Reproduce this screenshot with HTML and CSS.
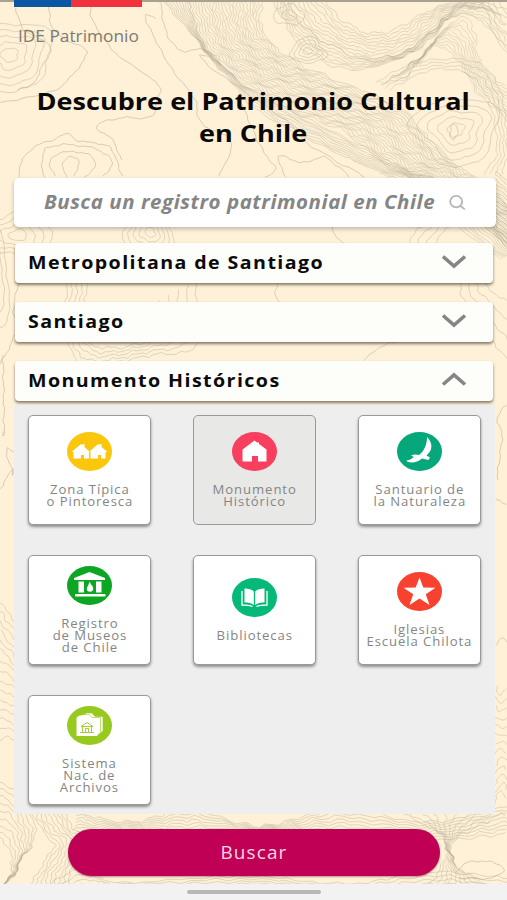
FILE: index.html
```
<!DOCTYPE html>
<html lang="es">
<head>
	<meta charset="utf-8">
	<title>IDE Patrimonio</title>
	<link rel="stylesheet" href="styles.css">
</head>
<body>
	<svg id="map" class="map" viewBox="0 0 507 900"></svg>
	<div class="app">
		<header class="top">
			<div class="flag"><i class="blue"></i><i class="red"></i></div>
			<div class="brand"><span class="wide">IDE Patrimonio</span></div>
		</header>
		<h1 class="title"><span class="wide">Descubre el Patrimonio Cultural<br>en Chile</span></h1>
		<div class="search">
			<span class="wide">Busca un registro patrimonial en Chile</span>
			<svg class="search-icon" viewBox="0 0 17 16"><ellipse cx="7.2" cy="6.6" rx="6" ry="5.7"/><path d="M11.5 11l4.3 3.4"/></svg>
		</div>
		<div class="select"><span class="wide">Metropolitana de Santiago</span><svg class="chevron" viewBox="0 0 26 16"><path d="M2 2.500l11 9.500l11-9.500"/></svg></div>
		<div class="select"><span class="wide">Santiago</span><svg class="chevron" viewBox="0 0 26 16"><path d="M2 2.500l11 9.500l11-9.500"/></svg></div>
		<div class="select open"><span class="wide">Monumento Históricos</span><svg class="chevron" viewBox="0 0 26 16"><path d="M2 12.500l11-9.500l11 9.500"/></svg></div>
		<div class="panel">
			<div class="card">
				<svg class="icon" viewBox="0 0 45 39"><ellipse fill="#fbc70d" cx="22.500" cy="19.500" rx="22.500" ry="19.500"/>
					<path fill="#fff" d="M5 19.500L14 12l1.500 1.500V12h2v3l5 4.500L31 12l1.500 1.500V12h2v3L40 19.500l-1.500 1V26.500H34V23h-3v3.500h-7.500v-7h-1.500v7h-5V23h-3v3.500H6.500v-6z"/></svg>
				<p class="wide">Zona Típica<br>o Pintoresca</p>
			</div>
			<div class="card active">
				<svg class="icon" viewBox="0 0 45 39"><ellipse fill="#f83f5e" cx="22.500" cy="19.500" rx="22.500" ry="19.500"/>
					<path fill="#fff" d="M10.500 17.500L22.500 8.500l2.500 2h2v1.500L34.500 17.500V29.500H26V24h-6v5.500h-9.500z"/></svg>
				<p class="wide">Monumento<br>Histórico</p>
			</div>
			<div class="card">
				<svg class="icon" viewBox="0 0 45 39"><ellipse fill="#06a77a" cx="22.500" cy="19.500" rx="22.500" ry="19.500"/>
					<path fill="#fff" d="M30 5C36 11 36 18 29.500 23.500L33 25.500 31.500 28 25 26.500C21 30 15 31.500 10.500 29.800L9.500 28.500C13 28 15 26.500 17 25L14 23.500C17 22 20 22.500 22 23 27 19 30 13 30 5z"/></svg>
				<p class="wide">Santuario de<br>la Naturaleza</p>
			</div>
			<div class="card">
				<svg class="icon" viewBox="0 0 45 39"><ellipse fill="#0ca622" cx="22.500" cy="19.500" rx="22.500" ry="19.500"/>
					<path fill="#fff" d="M22.500 6L38 12v2H7v-2zM11.500 15.500h5.500v11h-5.500zM29 15.500h5.500v11H29zM8 28h30.500v2.500H8zM23 15.500c0 3 3.200 4 3.200 7a3.200 3.200 0 0 1-6.400 0c0-2 1.800-2.500 1.800-4.500z"/></svg>
				<p class="wide">Registro<br>de Museos<br>de Chile</p>
			</div>
			<div class="card">
				<svg class="icon" viewBox="0 0 45 39"><ellipse fill="#07b979" cx="22.500" cy="19.500" rx="22.500" ry="19.500"/>
					<path fill="#fff" d="M12.500 10.500c4 0 7 .7 9.300 3V27c-2.500-2-5.300-2.500-9.300-2.500zM32.500 10.500c-4 0-7 .7-9.300 3V27c2.500-2 5.300-2.500 9.300-2.500z"/>
					<path fill="none" stroke="#fff" stroke-width="1.300" d="M10 13v14c5 0 8 .2 10.500 1.500M35 13v14c-5 0-8 .2-10.500 1.500"/></svg>
				<p class="wide">Bibliotecas</p>
			</div>
			<div class="card">
				<svg class="icon" viewBox="0 0 45 39"><ellipse fill="#f8412e" cx="22.500" cy="19.500" rx="22.500" ry="19.500"/>
					<path fill="#fff" d="M22.500 5.500L26.300 15.600 38.500 15.800 28.800 22.300 32.500 33 22.500 26.600 12.500 33 16.200 22.300 6.500 15.800 18.700 15.600z"/></svg>
				<p class="wide">Iglesias<br>Escuela Chilota</p>
			</div>
			<div class="card">
				<svg class="icon" viewBox="0 0 45 39"><ellipse fill="#98c91f" cx="22.500" cy="19.500" rx="22.500" ry="19.500"/>
					<path fill="#fff" stroke="#98c91f" stroke-width=".6" d="M16 10l3-3h6l3 3.500h8V25l-4 3H16z"/>
					<path fill="#fff" stroke="#98c91f" stroke-width=".6" d="M13 11l3-2.500h6l3 3h8.500V27l-3 2H13z"/>
					<path fill="#fff" d="M9.500 11.500l3-2h6l3 3H30.500V30h-21z"/>
					<path fill="none" stroke="#98c91f" stroke-width=".9" d="M14 20.500l6-4 6 4zM15.500 21v5M18.500 26v-3.500h3V26M24.500 21v5M13 26.500h14"/></svg>
				<p class="wide">Sistema<br>Nac. de<br>Archivos</p>
			</div>
		</div>
		<div class="actions"><button class="submit"><span class="wide">Buscar</span></button></div>
		<div class="navbar"><div class="handle"></div></div>
	</div>
	<script src="map.js"></script>
</body>
</html>
```
FILE: styles.css
```
* {
	box-sizing: border-box;
}

body {
	margin: 0;
	background: #fef1d8;
	font-family: "Open Sans", "Noto Sans", sans-serif;
	overflow: hidden;
}

.map {
	position: absolute;
	top: 0;
	left: 0;
	width: 507px;
	height: 900px;
	fill: none;
	stroke: #a99f88;
	stroke-width: .9;
	stroke-linejoin: round;
}

.app {
	position: relative;
	width: 507px;
	height: 900px;
	display: flex;
	flex-direction: column;
}

/* texts are drawn a bit wider than the font */
.wide {
	display: inline-block;
	transform: scaleX(1.08);
	transform-origin: left center;
	white-space: nowrap;
}

.top {
	height: 85px;
	border-top: 2px solid #aaa291;
}

.flag {
	display: flex;
	margin: -2px 0 0 14px;
	height: 7px;
}

.flag i {
	width: 57px;
	background: #0b57a4;
}

.flag .red {
	width: 71px;
	background: #f0323f;
}

.brand {
	margin: 17px 0 0 18px;
	font-size: 16px;
	line-height: 24px;
	color: #807a70;
}

.title {
	margin: 0;
	height: 93px;
	font-size: 24px;
	line-height: 32px;
	font-weight: 700;
	text-align: center;
	color: #0a0808;
}

.title .wide {
	transform: scaleX(1.127);
}

.title .wide, .card .wide, .submit .wide {
	transform-origin: center;
}

.search {
	display: flex;
	align-items: center;
	margin: 0 11px 16px 14px;
	height: 49px;
	padding: 0 0 2px 30px;
	background: #fff;
	border-radius: 5px;
	box-shadow: 0 2px 4px rgba(0,0,0,.25);
	font-size: 19px;
	font-weight: 700;
	font-style: italic;
	letter-spacing: .5px;
	color: #858585;
}

.search .wide {
	width: 405px;
	transform: scaleX(1.077);
}

.search-icon {
	width: 17px;
	height: 16px;
	margin-top: 2px;
	fill: none;
	stroke: #b5b5b5;
	stroke-width: 1.8;
}

.select {
	display: flex;
	align-items: center;
	justify-content: space-between;
	margin: 0 14px 19.500px 15px;
	height: 39.500px;
	padding: 0 26px 1px 13px;
	background: #fdfdfa;
	border-radius: 4px;
	box-shadow: 0 2px 3px rgba(70,60,45,.65);
	font-size: 18px;
	font-weight: 700;
	letter-spacing: 1.300px;
	color: #0b0b0b;
}

.select .wide {
	transform: scaleX(1.09);
}

.select.open {
	margin-bottom: 4px;
}

.chevron {
	width: 26px;
	height: 16px;
	fill: none;
	stroke: #858585;
	stroke-width: 3.600;
}

.panel {
	display: grid;
	grid-template-columns: repeat(3, 123px);
	grid-auto-rows: 110px;
	gap: 30px 42px;
	margin: 0 12px 0 14px;
	height: 409px;
	padding: 10px 14px;
	background: #eee;
}

.card {
	display: flex;
	flex-direction: column;
	align-items: center;
	justify-content: center;
	background: #fff;
	border: 1px solid #999;
	border-radius: 5px;
	box-shadow: 0 2px 3px rgba(0,0,0,.4);
}

.card.active {
	background: #e8e8e6;
	box-shadow: none;
}

.icon {
	width: 45px;
	height: 39px;
	flex: none;
}

.card p {
	margin: 12px 0 1px;
	font-size: 13px;
	line-height: 12px;
	letter-spacing: .9px;
	text-align: center;
	color: #858585;
}

.card .wide {
	transform: scaleX(1.01);
}

.actions {
	height: 70px;
	padding: 15px 67px 0 68px;
}

.submit {
	display: block;
	width: 372px;
	height: 47px;
	padding: 0;
	border: 0;
	border-radius: 24px;
	background: #bf0055;
	box-shadow: 0 1px 2px rgba(90,0,40,.4);
	font: 500 18px "Open Sans", sans-serif;
	letter-spacing: 1.100px;
	color: #f8d5e5;
}

.submit .wide {
	transform: scaleX(1.05);
}

.navbar {
	flex: 1;
	padding-top: 6px;
	background: #f2f2f2;
}

.handle {
	width: 134px;
	height: 4px;
	margin-left: 187px;
	border-radius: 2px;
	background: #b8b8b8;
}
```
FILE: map.js
```
// Topographic background: bands of contours between two guide lines,
// closed rings around the summits and a few loose lines.
var map = document.getElementById('map');

function draw(points, closed, opacity)
{
	var d = '';
	points.forEach(function(p, i) {
		d += (i ? 'L' : 'M') + p[0].toFixed(1) + ' ' + p[1].toFixed(1);
	});
	var path = document.createElementNS('http://www.w3.org/2000/svg', 'path');
	path.setAttribute('d', d + (closed ? 'Z' : ''));
	path.setAttribute('opacity', opacity);
	map.appendChild(path);
}

function resample(pts, n)
{
	var out = [];
	for(var i = 0; i <= n; i++) {
		var t = i / n * (pts.length - 1), k = Math.min(Math.floor(t), pts.length - 2), f = t - k;
		var a = pts[Math.max(k - 1, 0)], b = pts[k], c = pts[k + 1], e = pts[Math.min(k + 2, pts.length - 1)];
		out.push([0, 1].map(function(j) {
			return .5 * (2 * b[j] + (c[j] - a[j]) * f + (2 * a[j] - 5 * b[j] + 4 * c[j] - e[j]) * f * f + (3 * b[j] - a[j] - 3 * c[j] + e[j]) * f * f * f);
		}));
	}
	return out;
}

function wobble(x, y, amp)
{
	return [
		x + amp * (Math.sin(y * .31 + x * .07) + .6 * Math.sin(y * .73 - x * .21)),
		y + amp * (Math.sin(x * .27 - y * .09) + .6 * Math.sin(x * .67 + y * .17))
	];
}

function band(a, b, count, amp, opacity)
{
	a = resample(a, 70);
	b = resample(b, 70);
	for(var i = 0; i < count; i++) {
		var t = i / (count - 1 || 1);
		draw(a.map(function(p, k) {
			return wobble(p[0] + (b[k][0] - p[0]) * t, p[1] + (b[k][1] - p[1]) * t, amp);
		}), false, opacity);
	}
}

function rings(cx, cy, rx, ry, count, opacity)
{
	for(var i = 1; i <= count; i++) {
		var pts = [];
		for(var k = 0; k < 48; k++) {
			var a = k / 48 * Math.PI * 2, r = i / count * (1 + .12 * Math.sin(a * 3 + cx) + .07 * Math.sin(a * 5 + cy));
			pts.push(wobble(cx + rx * r * Math.cos(a), cy + ry * r * Math.sin(a), .6));
		}
		draw(pts, true, opacity);
	}
}

function line(pts, opacity)
{
	band(pts, pts, 1, .7, opacity || .5);
}

// main ridge
band([[188,0],[205,45],[245,85],[300,115],[370,150],[410,172],[465,190],[515,250]],
	[[163,0],[196,40],[225,75],[260,112],[320,145],[370,168],[410,190],[500,260]], 10, 1, .36);
band([[262,0],[262,30],[290,58],[335,80],[400,108],[440,150],[480,182],[520,215]],
	[[188,0],[205,42],[240,78],[290,110],[345,132],[385,165],[430,190],[515,250]], 25, 1.6, .36);
// north east valley
band([[282,0],[298,22],[325,42],[365,60],[405,55],[435,30],[465,8],[500,14]],
	[[325,0],[340,18],[358,30],[382,33],[405,25],[425,12],[445,4],[470,-8]], 10, 1.3, .38);
band([[270,0],[282,18],[305,50],[355,70],[420,48],[450,18],[480,20],[507,55]],
	[[290,0],[298,20],[325,42],[365,58],[408,50],[440,22],[470,-2],[507,10]], 7, 1.3, .36);
band([[380,82],[405,78],[425,50],[445,48],[465,72],[480,95],[507,120]],
	[[420,65],[445,28],[465,18],[475,35],[478,58],[490,75],[507,85]], 11, 1.2, .32);
band([[480,0],[488,15],[494,35],[507,45]], [[500,0],[502,8],[505,12],[507,14]], 4, .6, .4);
rings(308, 51, 17, 13, 4, .4);
rings(289, 15, 15, 10, 2, .4);
rings(456, 130, 42, 34, 5, .42);
rings(454, 132, 4, 7, 1, .5);
band([[390,90],[430,70],[470,75],[490,105],[497,150],[485,174]],
	[[375,82],[420,62],[475,62],[500,90],[507,150],[500,176]], 4, 1, .36);
band([[495,172],[507,180]], [[494,235],[507,246]], 17, .8, .5);
// west side
rings(10, 55, 43, 34, 5, .42);
line([[20,177],[21,162],[35,147],[52,140],[68,134],[80,141],[108,146],[116,160],[122,177]]);
line([[44,177],[42,160],[47,148],[62,145],[75,145],[95,149],[110,157],[110,168],[103,177]]);
line([[55,177],[50,164],[56,154],[70,152],[88,154],[95,165],[85,177]]);
line([[66,177],[63,165],[68,158],[79,159],[77,169],[74,177]]);
line([[16,8],[24,30],[50,45],[43,65],[32,84],[18,90]]);
line([[48,0],[52,27],[67,40],[87,52],[76,70],[55,90],[0,103]]);
line([[92,0],[93,22],[118,55],[157,83],[157,100],[150,117],[120,118],[96,126],[112,140],[121,160]]);
line([[157,18],[145,16],[160,48],[176,75],[195,100],[200,122],[220,133],[232,146],[218,177]]);
line([[160,0],[166,32],[180,50],[207,50],[222,65]]);
line([[240,100],[260,145],[275,168],[266,177]]);
line([[222,65],[208,56],[202,60],[245,92],[285,120],[310,145],[365,177]]);
line([[286,177],[278,160],[285,156],[302,163],[322,157],[338,166],[350,177]]);
// between the fields
rings(18, 235, 36, 22, 4, .42);
rings(150, 232, 24, 26, 5, .4);
band([[68,275],[66,310],[72,352],[92,365],[150,355],[195,345],[195,280]],
	[[88,275],[85,305],[88,340],[110,348],[145,342],[165,325],[160,300]], 5, 1.2, .4);
line([[332,226],[335,236],[350,245]]);
line([[280,280],[275,292],[280,304]]);
line([[400,340],[378,348],[365,361]]);
band([[425,225],[410,243],[455,275],[465,302],[507,360]], [[450,225],[438,245],[475,270],[490,290],[507,300]], 4, 1, .42);
// left and right edges
rings(-6, 282, 14, 58, 3, .42);
line([[20,280],[13,310],[20,325],[10,345],[0,365]]);
line([[3,355],[4,430],[2,432]]);
line([[14,452],[6,450],[13,475],[12,470],[3,485],[0,488]]);
line([[507,405],[496,420],[502,432],[497,480]]);
line([[507,505],[495,498]]);
line([[495,645],[501,638],[507,642]]);
band([[0,600],[8,613],[20,628]], [[0,740],[8,738],[20,742]], 15, 1.2, .4);
band([[495,685],[501,695],[507,690]], [[494,805],[501,790],[507,798]], 13, 1.2, .38);
// bottom strip
band([[-5,780],[15,790],[28,808],[35,835],[22,860],[5,890]], [[-5,838],[3,840],[10,850],[12,865],[8,880],[0,890]], 9, 1.2, .42);
band([[28,800],[38,825],[54,845],[40,868],[30,890]], [[70,800],[68,820],[86,842],[74,865],[64,890]], 9, 1.4, .42);
band([[75,812],[130,822],[190,810],[260,826],[340,810],[430,822],[507,806]],
	[[75,835],[130,832],[190,834],[260,832],[340,834],[430,840],[507,834]], 8, 1.4, .4);
band([[395,810],[440,835],[445,860],[425,890]], [[507,812],[455,840],[460,868],[500,890]], 10, 1.4, .38);
band([[40,890],[80,870],[120,882],[250,876],[350,884],[430,872],[507,878]],
	[[60,894],[90,884],[130,890],[250,884],[350,892],[430,884],[507,890]], 4, 1.2, .4);
line([[455,872],[470,862],[490,862],[504,869],[492,878],[460,878]]);
```
